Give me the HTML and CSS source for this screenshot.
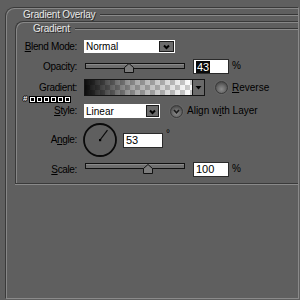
FILE: index.html
```html
<!DOCTYPE html>
<html>
<head>
<meta charset="utf-8">
<link rel="stylesheet" href="styles.css">
</head>
<body>
<div class="outer">
  <div class="head head-outer"><span class="title t-outer">Gradient Overlay</span><span class="hline"></span></div>
  <div class="inner">
    <div class="head head-inner"><span class="title t-inner">Gradient</span><span class="hline"></span></div>

    <div class="row r-blend">
      <span class="lbl"><u>B</u>lend Mode:</span>
      <div class="select sel-blend"><span class="val">Normal</span><span class="btn"><svg width="13" height="9" viewBox="0 0 13 9"><path d="M4 3.5 L6.5 6 L9 3.5" fill="none" stroke="#000" stroke-width="2"/></svg></span></div>
    </div>

    <div class="row r-opacity">
      <span class="lbl">Opacity:</span>
      <div class="slider s-opacity"><div class="track"></div><svg class="thumb" style="left:39px" width="10" height="10" viewBox="0 0 10 10"><polygon points="0.5,4.5 5,0.5 9.5,4.5 9.5,9.5 0.5,9.5" fill="#7c7c7c" stroke="#111" stroke-width="1"/></svg></div>
      <div class="num"><span class="sel">43</span></div>
      <span class="pct">%</span>
    </div>

    <div class="row r-grad">
      <span class="lbl">Gradient:</span>
      <div class="swatch"><div class="grad"></div><div class="arrow"><svg width="11" height="15" viewBox="0 0 11 15"><polygon points="2.5,6 8.5,6 5.5,9.5" fill="#000"/></svg></div></div>
      <span class="radio"></span>
      <span class="rtext"><u>R</u>everse</span>
    </div>

    <div class="row r-hex">
      <span class="hash">#</span><span class="box"></span><span class="box"></span><span class="box"></span><span class="box"></span><span class="box"></span><span class="box"></span>
    </div>

    <div class="row r-style">
      <span class="lbl"><u>S</u>tyle:</span>
      <div class="select sel-style"><span class="val">Linear</span><span class="btn"><svg width="11" height="9" viewBox="0 0 11 9"><path d="M3 3.5 L5.5 6 L8 3.5" fill="none" stroke="#000" stroke-width="2"/></svg></span></div>
      <span class="radio checked"><svg width="11" height="11" viewBox="0 0 11 11"><path d="M3 4 L5.5 6.8 L8 4" fill="none" stroke="#1a1a1a" stroke-width="1.6"/></svg></span>
      <span class="rtext">Align w<u>i</u>th Layer</span>
    </div>

    <div class="row r-angle">
      <span class="lbl">A<u>n</u>gle:</span>
      <svg class="dial" width="36" height="36" viewBox="0 0 36 36"><circle cx="18" cy="18" r="16" fill="none" stroke="#0a0a0a" stroke-width="1.8"/><line x1="18" y1="18" x2="25.5" y2="8.2" stroke="#0a0a0a" stroke-width="1.2"/><rect x="17" y="17" width="2.2" height="2.2" fill="#000"/></svg>
      <div class="num num-angle">53</div>
      <span class="deg">°</span>
    </div>

    <div class="row r-scale">
      <span class="lbl"><u>S</u>cale:</span>
      <div class="slider s-scale"><div class="track"></div><svg class="thumb" style="left:58px" width="10" height="10" viewBox="0 0 10 10"><polygon points="0.5,4.5 5,0.5 9.5,4.5 9.5,9.5 0.5,9.5" fill="#7c7c7c" stroke="#111" stroke-width="1"/></svg></div>
      <div class="num">100</div>
      <span class="pct">%</span>
    </div>
  </div>
</div>
</body>
</html>
```
FILE: styles.css
```css
html, body {
  margin: 0;
  padding: 0;
}
body {
  width: 300px;
  height: 300px;
  overflow: hidden;
  background: #5f5f5f;
  font-family: "Liberation Sans", Arial, sans-serif;
  font-size: 10px;
  color: #000;
}
.outer {
  margin: 7px 0 0 5px;
  width: 294px;
  height: 292px;
  box-sizing: border-box;
  border-style: solid;
  border-width: 1px;
  border-color: #3a3a3a #8a8a8a #8a8a8a #3a3a3a;
  border-top-left-radius: 9px;
  box-shadow: inset 1px 1px 0 #878787;
}
.head {
  display: flex;
  align-items: center;
}
.head-outer {
  height: 13px;
}
.head-inner {
  height: 14px;
}
.title {
  flex: none;
  color: #e8e8e8;
  text-shadow: 1px 1px 0 #2a2a2a;
  white-space: nowrap;
  line-height: 12px;
  letter-spacing: -0.2px;
}
.t-outer {
  margin-left: 17px;
}
.t-inner {
  margin-left: 17px;
}
.hline {
  flex: 1;
  height: 0;
  margin-left: 5px;
  border-top: 1px solid #363636;
  border-bottom: 1px solid #8a8a8a;
}
.inner {
  margin-left: 9px;
  height: 163px;
  box-sizing: border-box;
  border-top: 1px solid #3a3a3a;
  border-left: 1px solid #3a3a3a;
  border-bottom: 1px solid #3a3a3a;
  border-top-left-radius: 8px;
  box-shadow: inset 1px 1px 0 #878787, 0 1px 0 #8a8a8a;
}
.row {
  display: flex;
  align-items: center;
}
.lbl {
  flex: none;
  width: 61px;
  margin-right: 7px;
  text-align: right;
  white-space: nowrap;
  line-height: 12px;
  letter-spacing: -0.35px;
}
u {
  text-decoration: underline;
  text-underline-offset: 1px;
}
.r-blend { margin-top: 4px; height: 13px; }
.r-opacity { margin-top: 6px; height: 15px; }
.r-grad { margin-top: 5px; height: 17px; }
.r-hex { margin-top: -1px; height: 8px; padding-left: 7px; }
.r-style { margin-top: 1px; height: 14px; }
.r-angle { margin-top: 4px; height: 35px; }
.r-scale { margin-top: 5px; height: 15px; }

.select {
  flex: none;
  position: relative;
  height: 100%;
  background: #fff;
  box-sizing: border-box;
  display: flex;
  align-items: center;
  padding-left: 2px;
}
.sel-blend { width: 91px; }
.sel-style { width: 76px; }
.val {
  font-size: 10px;
  line-height: 11px;
}
.btn {
  position: absolute;
  right: 1px;
  top: 1px;
  bottom: 1px;
  width: 13px;
  box-sizing: border-box;
  border: 1px solid #1c1c1c;
  background: #6c6c6c;
  display: flex;
  align-items: center;
  justify-content: center;
}
.sel-blend .btn { width: 15px; }
.btn svg { display: block; }

.slider {
  flex: none;
  position: relative;
  width: 100px;
  height: 100%;
  margin-left: 1px;
}
.track {
  position: absolute;
  left: 0;
  right: 0;
  height: 6px;
  box-sizing: border-box;
  border: 1px solid #111;
  background: linear-gradient(#8a8a8a 0 1px, #6e6e6e 1px);
}
.thumb {
  position: absolute;
  display: block;
}
.s-opacity .track { top: 4px; }
.s-opacity .thumb { top: 4px; }
.s-scale .track { top: 1px; }
.s-scale .thumb { top: 2px; }

.num {
  flex: none;
  margin-left: 8px;
  width: 36px;
  height: 15px;
  box-sizing: border-box;
  border: 1px solid #2a2a2a;
  background: #fff;
  font-size: 11px;
  line-height: 13px;
  padding-left: 2px;
  display: flex;
  align-items: center;
}
.sel {
  background: #0a0a0a;
  color: #fff;
  padding: 0 1px;
  line-height: 12px;
}
.pct {
  margin-left: 3px;
  font-size: 10px;
  margin-top: -3px;
}
.num-angle {
  margin-left: 5px;
  width: 40px;
  margin-top: 2px;
}
.deg {
  align-self: flex-start;
  margin-left: 3px;
  margin-top: 7px;
  font-size: 10px;
  line-height: 10px;
}
.dial {
  flex: none;
  display: block;
  margin-left: -2px;
}

.swatch {
  flex: none;
  width: 121px;
  height: 100%;
  box-sizing: border-box;
  border: 1px solid #141414;
  display: flex;
}
.grad {
  flex: 1;
  background:
    linear-gradient(to right, rgba(0,0,0,0.95), rgba(0,0,0,0.35) 45%, rgba(0,0,0,0)),
    repeating-conic-gradient(#cdcdcd 0 25%, #ffffff 0 50%) 0 0 / 10px 10px;
}
.arrow {
  width: 11px;
  border-left: 1px solid #141414;
  background: #6a6a6a;
  display: flex;
  align-items: center;
  justify-content: center;
}
.arrow svg { display: block; }

.radio {
  flex: none;
  width: 13px;
  height: 13px;
  box-sizing: border-box;
  border-radius: 50%;
  border: 1px solid #3a3a3a;
  background: radial-gradient(circle at 50% 65%, #8c8c8c 0, #6a6a6a 45%, #474747 80%);
  box-shadow: 0 0 0 1px #666;
  margin-left: 10px;
  display: flex;
  align-items: center;
  justify-content: center;
}
.radio svg { display: block; }
.rtext {
  margin-left: 4px;
  white-space: nowrap;
  line-height: 12px;
}
.hash {
  color: #fff;
  font-weight: bold;
  font-size: 8px;
  line-height: 8px;
  text-shadow: 1px 0 0 #000, -1px 0 0 #000, 0 1px 0 #000, 0 -1px 0 #000;
  margin-right: 3px;
}
.box {
  flex: none;
  width: 5px;
  height: 5px;
  box-sizing: border-box;
  border: 1px solid #fff;
  background: #000;
  outline: 1px solid #000;
  margin-right: 2px;
}
```
